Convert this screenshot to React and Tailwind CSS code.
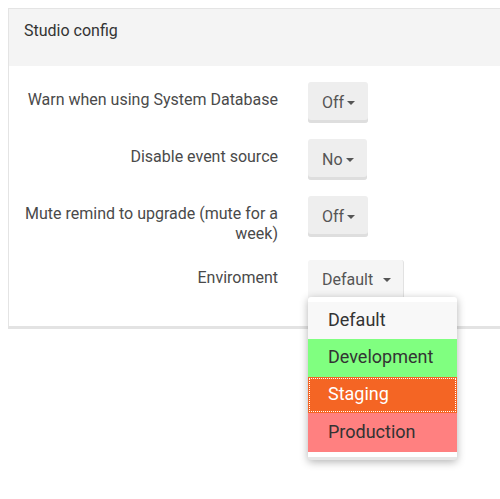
import React from "react";

function Caret() {
  return (
    <svg width="8" height="4" viewBox="0 0 8 4" className="block">
      <path d="M0 0 L8 0 L4 4 Z" fill="#555" />
    </svg>
  );
}

function Row({ label, children }) {
  return (
    <div className="flex items-start gap-[30px]">
      <div className="w-[254px] shrink-0 text-right pt-[8px] text-[16px] leading-[20px] text-[#4a4a4a]">
        {label}
      </div>
      {children}
    </div>
  );
}

function Btn({ text }) {
  return (
    <div className="h-[41px] pl-[14px] pr-[13px] rounded-[3px] bg-[#eeeeee] shadow-[inset_0_-3px_0_#dedede] flex items-center gap-[3px] text-[16px] text-[#555]">
      <span>{text}</span>
      <Caret />
    </div>
  );
}

export default function App() {
  const items = [
    { t: "Default", cls: "bg-[#f8f8f8] text-[#333] h-[37px]" },
    { t: "Development", cls: "bg-[#80ff80] text-[#333] h-[38px]" },
    {
      t: "Staging",
      cls: "bg-[#f46524] text-white h-[36px] outline outline-1 outline-dotted outline-white -outline-offset-2",
    },
    { t: "Production", cls: "bg-[#ff8080] text-[#333] h-[39px]" },
  ];
  return (
    <div className="w-[500px] h-[499px] overflow-hidden bg-white" style={{ fontFamily: "Roboto, 'Noto Sans', sans-serif" }}>
      <div className="ml-2 mt-2 w-[540px] border-t border-l border-[#e4e4e4] shadow-[0_3px_0_#e3e3e3] bg-white">
        <div className="h-[57px] bg-[#f4f4f4] pl-[15px] pt-[11px] text-[16px] leading-[21px] text-[#333]">
          Studio config
        </div>
        <div className="pt-[16px] pb-[26px] pl-[15px] flex flex-col gap-[16px]">
          <Row label="Warn when using System Database">
            <Btn text="Off" />
          </Row>
          <Row label="Disable event source">
            <Btn text="No" />
          </Row>
          <Row label="Mute remind to upgrade (mute for a week)">
            <Btn text="Off" />
          </Row>
          <Row label="Enviroment">
            <div className="relative">
              <div className="h-[40px] pl-[14px] pr-[12px] rounded-[3px] bg-[#f5f5f5] border-r border-[#e2e2e2] flex items-center gap-[10px] text-[16px] text-[#555]">
                <span>Default</span>
                <Caret />
              </div>
              <div className="absolute left-0 top-[37px] w-[149px] bg-white rounded-[3px] pt-[5px] pb-[5px] border-b-[3px] border-[#e6e6e6] shadow-[0_2px_8px_rgba(0,0,0,0.3)] z-10">
                {items.map((it) => (
                  <div key={it.t} className={`flex items-center pl-[20px] pb-[3px] text-[18px] ${it.cls}`}>
                    {it.t}
                  </div>
                ))}
              </div>
            </div>
          </Row>
        </div>
      </div>
    </div>
  );
}
